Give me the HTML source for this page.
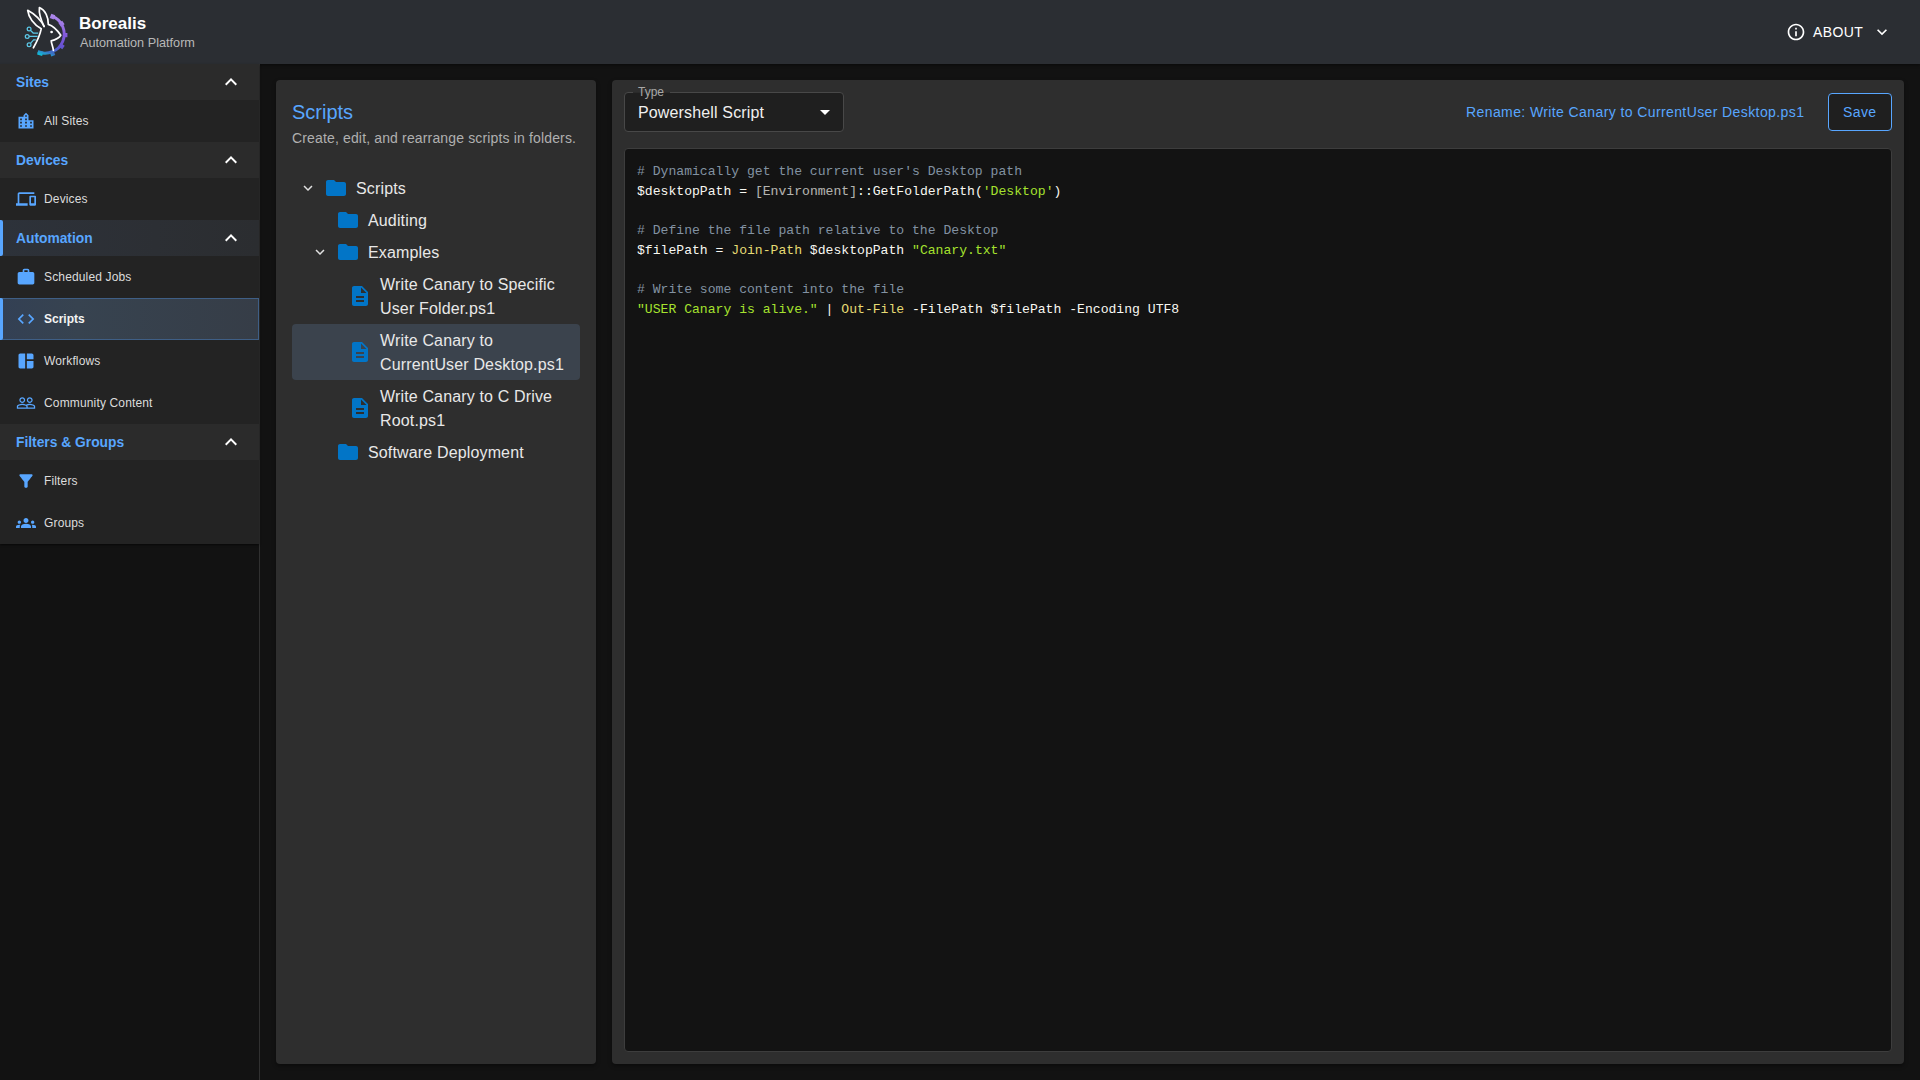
<!DOCTYPE html>
<html><head><meta charset="utf-8">
<style>
*{box-sizing:border-box;margin:0;padding:0}
html,body{width:1920px;height:1080px;overflow:hidden;background:#121212;font-family:"Liberation Sans",sans-serif;color:#e6e6e6}
.abs{position:absolute}
#top{position:absolute;left:0;top:0;width:1920px;height:64px;background:#2b2e33;box-shadow:0 1px 3px rgba(0,0,0,.5);z-index:2}
#side{position:absolute;left:0;top:64px;width:260px;height:1016px;background:#121212;border-right:1px solid #303030;z-index:3}
.sh{position:absolute;left:0;width:259px;height:36px;background:#2b2b2b}
.sh .t{position:absolute;left:16px;top:11px;font-size:13.8px;font-weight:bold;color:#58a6ff;line-height:16px;letter-spacing:0}
.sh svg{position:absolute;left:219px;top:6px;width:24px;height:24px;fill:#fff}
.si{position:absolute;left:0;width:259px;height:42px;background:#232323}
.si svg{position:absolute;left:16px;top:11px;width:20px;height:20px;fill:#58a6ff}
.si .t{position:absolute;left:44px;top:14px;font-size:12px;line-height:14px;color:#dcdcdc;letter-spacing:0.15px}
.panel{position:absolute;background:#2e2e2e;border-radius:4px;box-shadow:0 2px 4px rgba(0,0,0,.4)}
.tr{position:absolute;font-size:16px;line-height:24px;color:#e8e8e8;letter-spacing:0.15px;white-space:nowrap}
.tr svg{position:absolute;width:24px;height:24px}
.fold{fill:#0275c7}
.chev{fill:#e0e0e0}
#code{position:absolute;left:637px;top:162px;font-family:"Liberation Mono",monospace;font-size:13.1px;line-height:19.67px;color:#f8f8f2;white-space:pre}
.c{color:#8292a2}.s{color:#a6e22e}.f{color:#e6db74}.n{color:#f8f8f2;opacity:.7}
</style></head><body>
<div id="top">
  <svg class="abs" style="left:18px;top:2px" width="60" height="60" viewBox="0 0 60 60">
    <defs>
      <linearGradient id="g" gradientUnits="userSpaceOnUse" x1="34" y1="14" x2="20" y2="52">
        <stop offset="0" stop-color="#ab86ea"/>
        <stop offset="0.33" stop-color="#8259da"/>
        <stop offset="0.6" stop-color="#6a52d4"/>
        <stop offset="0.86" stop-color="#3b6ec3"/>
        <stop offset="1" stop-color="#10bcd6"/>
      </linearGradient>
    </defs>
    <path d="M34.2 14.2 A18.4 18.4 0 1 1 19.8 49.8" fill="none" stroke="url(#g)" stroke-width="2.9"/>
    <g fill="url(#g)"><polygon points="31.71,16.01 33.32,11.81 37.24,13.31 35.63,17.51"/><polygon points="40.53,21.34 44.22,18.76 46.63,22.20 42.94,24.78"/><polygon points="44.90,31.00 49.40,31.00 49.40,35.20 44.90,35.20"/><polygon points="43.01,41.28 46.72,43.83 44.34,47.29 40.63,44.74"/><polygon points="35.63,48.69 37.24,52.89 33.32,54.39 31.71,50.19"/><polygon points="25.38,49.58 24.11,54.00 19.11,52.57 20.38,48.15"/></g>
    <g fill="none" stroke="#fff" stroke-width="1.7" stroke-linejoin="round" stroke-linecap="round">
      <path d="M26.1 24.4 C23.5 19 17 12 9.7 8.3 C10.5 15 15.5 22.5 23.3 26.7 C21.8 34 18.5 40.5 15.4 45.8"/>
      <path d="M26.1 24.4 C22.5 17 20.8 10.5 21.4 5.6 C27.5 8 30.5 15.5 30.3 22.4 C35 23.8 38.8 27.5 42.8 33.3 C40.5 37 37 38 33.2 38.9 C33.5 42 35 45 35.4 48.3"/>
    </g>
    <circle cx="33.6" cy="30" r="1.35" fill="#fff"/>
    <g fill="none" stroke="#5cc8e8" stroke-width="1.25">
      <circle cx="11.1" cy="27" r="1.9"/><circle cx="9.2" cy="34.4" r="1.9"/><circle cx="11.1" cy="42.7" r="1.9"/>
      <path d="M12.5 28.4 L15.2 31 L20.2 31 M11.1 34.4 L19.6 34.4 M12.5 41.3 L15.6 37.9 L17.8 37.9"/>
    </g>
  </svg>
  <div class="abs" style="left:79px;top:14px;font-size:17px;font-weight:bold;color:#fff;line-height:20px">Borealis</div>
  <div class="abs" style="left:80px;top:35.5px;font-size:12.7px;color:#b8b8b8;line-height:15px">Automation Platform</div>
  <svg class="abs" style="left:1786px;top:22px" width="20" height="20" viewBox="0 0 24 24" fill="#fff"><path d="M11 7h2v2h-2zm0 4h2v6h-2zm1-9C6.48 2 2 6.48 2 12s4.48 10 10 10 10-4.48 10-10S17.52 2 12 2zm0 18c-4.41 0-8-3.59-8-8s3.59-8 8-8 8 3.59 8 8-3.59 8-8 8z"/></svg>
  <div class="abs" style="left:1813px;top:24px;font-size:14px;letter-spacing:0.4px;color:#fff;line-height:16px">ABOUT</div>
  <svg class="abs" style="left:1872px;top:22px" width="20" height="20" viewBox="0 0 24 24" fill="#fff"><path d="M16.59 8.59 12 13.17 7.41 8.59 6 10l6 6 6-6z"/></svg>
</div>

<div id="side">
  <div style="position:absolute;left:0;top:0;width:259px;height:480px;background:#232323;box-shadow:0 1px 2px rgba(0,0,0,.6)"></div>
  <div class="sh" style="top:0"><div class="t">Sites</div><svg viewBox="0 0 24 24"><path d="M12 8l-6 6 1.41 1.41L12 10.83l4.59 4.58L18 14z"/></svg></div>
  <div class="si" style="top:36px"><svg viewBox="0 0 24 24"><path d="M15 11V5l-3-3-3 3v2H3v14h18V11h-6zm-8 8H5v-2h2v2zm0-4H5v-2h2v2zm0-4H5V9h2v2zm6 8h-2v-2h2v2zm0-4h-2v-2h2v2zm0-4h-2V9h2v2zm0-4h-2V5h2v2zm6 12h-2v-2h2v2zm0-4h-2v-2h2v2z"/></svg><div class="t">All Sites</div></div>
  <div class="sh" style="top:78px"><div class="t">Devices</div><svg viewBox="0 0 24 24"><path d="M12 8l-6 6 1.41 1.41L12 10.83l4.59 4.58L18 14z"/></svg></div>
  <div class="si" style="top:114px"><svg viewBox="0 0 24 24"><path d="M4 6h18V4H4c-1.1 0-2 .9-2 2v11H0v3h14v-3H4V6zm19 2h-6c-.55 0-1 .45-1 1v10c0 .55.45 1 1 1h6c.55 0 1-.45 1-1V9c0-.55-.45-1-1-1zm-1 9h-4v-7h4v7z"/></svg><div class="t">Devices</div></div>
  <div class="sh" style="top:156px;background:linear-gradient(90deg,#2d323a,#2c2f34 60%,#2b2d30)"><div style="position:absolute;left:0;top:0;width:3px;height:36px;background:#58a6ff;border-radius:0 2px 2px 0"></div><div class="t">Automation</div><svg viewBox="0 0 24 24"><path d="M12 8l-6 6 1.41 1.41L12 10.83l4.59 4.58L18 14z"/></svg></div>
  <div class="si" style="top:192px"><svg viewBox="0 0 24 24"><path d="M20 6h-4V4c0-1.11-.89-2-2-2h-4c-1.11 0-2 .89-2 2v2H4c-1.11 0-1.99.89-1.99 2L2 19c0 1.11.89 2 2 2h16c1.11 0 2-.89 2-2V8c0-1.11-.89-2-2-2zm-6 0h-4V4h4v2z"/></svg><div class="t">Scheduled Jobs</div></div>
  <div class="si" style="top:234px;background:linear-gradient(90deg,#334054,#374350 30%,#363d47);border:1px solid #3f5f86;border-left:none"><div style="position:absolute;left:0;top:-1px;width:3px;height:42px;background:#58a6ff;border-radius:0 2px 2px 0"></div><svg viewBox="0 0 24 24" style="top:10px"><path d="M9.4 16.6 4.8 12l4.6-4.6L8 6l-6 6 6 6 1.4-1.4zm5.2 0 4.6-4.6-4.6-4.6L16 6l6 6-6 6-1.4-1.4z"/></svg><div class="t" style="font-weight:bold;color:#f4f4f4;top:13px;letter-spacing:0">Scripts</div></div>
  <div class="si" style="top:276px"><svg viewBox="0 0 24 24"><path d="M11 21H5c-1.1 0-2-.9-2-2V5c0-1.1.9-2 2-2h6v18zm2 0h6c1.1 0 2-.9 2-2v-7h-8v9zm8-11V5c0-1.1-.9-2-2-2h-6v7h8z"/></svg><div class="t">Workflows</div></div>
  <div class="si" style="top:318px"><svg viewBox="0 0 24 24"><path d="M16.5 13c-1.2 0-3.07.34-4.5 1-1.43-.67-3.3-1-4.5-1C5.33 13 1 14.08 1 16.25V19h22v-2.75c0-2.17-4.330-3.25-6.5-3.25zm-4 4.5h-10v-1.25c0-.54 2.56-1.75 5-1.75s5 1.21 5 1.75v1.25zm9 0H14v-1.25c0-.46-.2-.86-.52-1.22.88-.3 1.96-.53 3.02-.53 2.44 0 5 1.21 5 1.75v1.25zM7.5 12c1.930 0 3.5-1.57 3.5-3.5S9.43 5 7.5 5 4 6.57 4 8.5 5.57 12 7.5 12zm0-5.5c1.1 0 2 .9 2 2s-.9 2-2 2-2-.9-2-2 .9-2 2-2zm9 5.5c1.93 0 3.5-1.57 3.5-3.5S18.43 5 16.5 5 13 6.57 13 8.5s1.57 3.5 3.5 3.5zm0-5.5c1.1 0 2 .9 2 2s-.9 2-2 2-2-.9-2-2 .9-2 2-2z"/></svg><div class="t">Community Content</div></div>
  <div class="sh" style="top:360px"><div class="t">Filters &amp; Groups</div><svg viewBox="0 0 24 24"><path d="M12 8l-6 6 1.41 1.41L12 10.83l4.59 4.58L18 14z"/></svg></div>
  <div class="si" style="top:396px"><svg viewBox="0 0 24 24"><path d="M4.25 5.61C6.27 8.2 10 13 10 13v6c0 .55.45 1 1 1h2c.55 0 1-.45 1-1v-6s3.72-4.8 5.74-7.39c.51-.66.04-1.61-.79-1.61H5.04c-.83 0-1.3.95-.79 1.61z"/></svg><div class="t">Filters</div></div>
  <div class="si" style="top:438px"><svg viewBox="0 0 24 24"><path d="M12 12.75c1.63 0 3.07.39 4.24.9 1.08.48 1.76 1.56 1.76 2.73V18H6v-1.61c0-1.18.68-2.26 1.760-2.73 1.17-.52 2.61-.91 4.24-.91zM4 13c1.1 0 2-.9 2-2s-.9-2-2-2-2 .9-2 2 .9 2 2 2zm1.13 1.1c-.37-.06-.74-.1-1.13-.1-.99 0-1.93.21-2.78.58C.48 14.9 0 15.62 0 16.43V18h4.5v-1.61c0-.83.23-1.61.63-2.29zM20 13c1.1 0 2-.9 2-2s-.9-2-2-2-2 .9-2 2 .9 2 2 2zm4 3.43c0-.81-.48-1.53-1.22-1.85-.85-.37-1.79-.58-2.78-.58-.39 0-.76.04-1.130.1.4.68.63 1.46.63 2.29V18H24v-1.57zM12 6c1.66 0 3 1.34 3 3s-1.34 3-3 3-3-1.34-3-3 1.34-3 3-3z"/></svg><div class="t">Groups</div></div>
</div>

<!-- Panel 1 -->
<div class="panel" style="left:276px;top:80px;width:320px;height:984px">
</div>
<!-- Panel 2 -->
<div class="panel" style="left:612px;top:80px;width:1292px;height:984px">
</div>

<!-- Panel 1 content -->
<div class="abs" style="left:292px;top:100px;font-size:20px;line-height:24px;color:#58a6ff">Scripts</div>
<div class="abs" style="left:292px;top:130px;font-size:14px;line-height:16px;color:#b0b0b0;letter-spacing:0.15px">Create, edit, and rearrange scripts in folders.</div>
<div class="abs" style="left:292px;top:324px;width:288px;height:56px;background:#3b434d;border-radius:4px"></div>
<svg class="abs chev" style="left:299px;top:179px" width="18" height="18" viewBox="0 0 24 24"><path d="M16.59 8.59 12 13.17 7.41 8.59 6 10l6 6 6-6z"/></svg><svg class="abs fold" style="left:324px;top:176px" width="24" height="24" viewBox="0 0 24 24"><path d="M10 4H4c-1.1 0-1.99.9-1.99 2L2 18c0 1.1.9 2 2 2h16c1.1 0 2-.9 2-2V8c0-1.1-.9-2-2-2h-8z"/></svg><div class="tr" style="left:356px;top:177px">Scripts</div><svg class="abs fold" style="left:336px;top:208px" width="24" height="24" viewBox="0 0 24 24"><path d="M10 4H4c-1.1 0-1.99.9-1.99 2L2 18c0 1.1.9 2 2 2h16c1.1 0 2-.9 2-2V8c0-1.1-.9-2-2-2h-8z"/></svg><div class="tr" style="left:368px;top:209px">Auditing</div><svg class="abs chev" style="left:311px;top:243px" width="18" height="18" viewBox="0 0 24 24"><path d="M16.59 8.59 12 13.17 7.41 8.59 6 10l6 6 6-6z"/></svg><svg class="abs fold" style="left:336px;top:240px" width="24" height="24" viewBox="0 0 24 24"><path d="M10 4H4c-1.1 0-1.99.9-1.99 2L2 18c0 1.1.9 2 2 2h16c1.1 0 2-.9 2-2V8c0-1.1-.9-2-2-2h-8z"/></svg><div class="tr" style="left:368px;top:241px">Examples</div><svg class="abs fold" style="left:348px;top:284px" width="24" height="24" viewBox="0 0 24 24"><path d="M14 2H6c-1.1 0-1.99.9-1.99 2L4 20c0 1.1.89 2 1.99 2H18c1.1 0 2-.9 2-2V8l-6-6zm2 16H8v-2h8v2zm0-4H8v-2h8v2zm-3-5V3.5L18.5 9H13z"/></svg><div class="tr" style="left:380px;top:273px">Write Canary to Specific<br>User Folder.ps1</div><svg class="abs fold" style="left:348px;top:340px" width="24" height="24" viewBox="0 0 24 24"><path d="M14 2H6c-1.1 0-1.99.9-1.99 2L4 20c0 1.1.89 2 1.99 2H18c1.1 0 2-.9 2-2V8l-6-6zm2 16H8v-2h8v2zm0-4H8v-2h8v2zm-3-5V3.5L18.5 9H13z"/></svg><div class="tr" style="left:380px;top:329px">Write Canary to<br>CurrentUser Desktop.ps1</div><svg class="abs fold" style="left:348px;top:396px" width="24" height="24" viewBox="0 0 24 24"><path d="M14 2H6c-1.1 0-1.99.9-1.99 2L4 20c0 1.1.89 2 1.99 2H18c1.1 0 2-.9 2-2V8l-6-6zm2 16H8v-2h8v2zm0-4H8v-2h8v2zm-3-5V3.5L18.5 9H13z"/></svg><div class="tr" style="left:380px;top:385px">Write Canary to C Drive<br>Root.ps1</div><svg class="abs fold" style="left:336px;top:440px" width="24" height="24" viewBox="0 0 24 24"><path d="M10 4H4c-1.1 0-1.99.9-1.99 2L2 18c0 1.1.9 2 2 2h16c1.1 0 2-.9 2-2V8c0-1.1-.9-2-2-2h-8z"/></svg><div class="tr" style="left:368px;top:441px">Software Deployment</div>
<!-- Panel 2 content -->
<div class="abs" style="left:624px;top:92px;width:220px;height:40px;background:#1f1f1f;border:1px solid #484848;border-radius:4px"></div>
<div class="abs" style="left:633px;top:92px;width:37px;height:1px;background:#2a2a2a"></div>
<div class="abs" style="left:638px;top:85px;font-size:12px;line-height:14px;color:#a8a8a8">Type</div>
<div class="abs" style="left:638px;top:104px;font-size:16px;line-height:18px;color:#f0f0f0;letter-spacing:0.15px">Powershell Script</div>
<svg class="abs" style="left:813px;top:100px" width="24" height="24" viewBox="0 0 24 24" fill="#fff"><path d="M7 10l5 5 5-5z"/></svg>
<div class="abs" style="left:1466px;top:104px;font-size:14px;line-height:16px;color:#58a6ff;letter-spacing:0.4px">Rename: Write Canary to CurrentUser Desktop.ps1</div>
<div class="abs" style="left:1828px;top:93px;width:64px;height:38px;background:#1f1f1f;border:1px solid #58a6ff;border-radius:4px"></div>
<div class="abs" style="left:1843px;top:104px;font-size:14px;line-height:16px;color:#58a6ff;letter-spacing:0.4px">Save</div>
<div class="abs" style="left:624px;top:148px;width:1268px;height:904px;background:#131313;border:1px solid #3d3d3d;border-radius:4px"></div>
<div id="code"><span class="c"># Dynamically get the current user's Desktop path</span>
$desktopPath = <span class="n">[Environment]</span>::GetFolderPath(<span class="s">'Desktop'</span>)

<span class="c"># Define the file path relative to the Desktop</span>
$filePath = <span class="f">Join-Path</span> $desktopPath <span class="s">"Canary.txt"</span>

<span class="c"># Write some content into the file</span>
<span class="s">"USER Canary is alive."</span> | <span class="f">Out-File</span> -FilePath $filePath -Encoding UTF8</div>
</body></html>
